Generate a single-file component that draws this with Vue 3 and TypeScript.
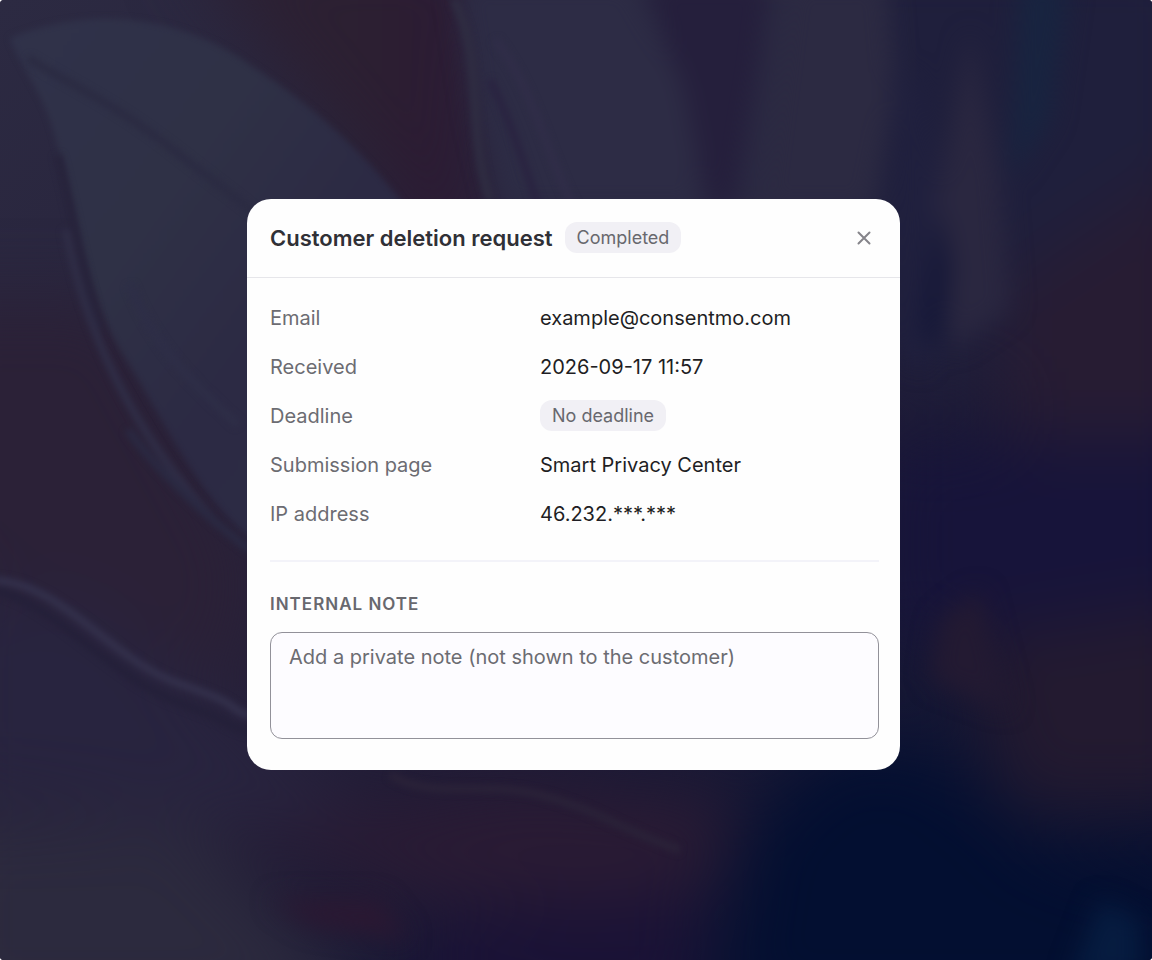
<script setup lang="ts">
import { ref } from 'vue'

interface Detail {
  label: string
  value: string
  badge?: boolean
}

const details: Detail[] = [
  { label: 'Email', value: 'example@consentmo.com' },
  { label: 'Received', value: '2026-09-17 11:57' },
  { label: 'Deadline', value: 'No deadline', badge: true },
  { label: 'Submission page', value: 'Smart Privacy Center' },
  { label: 'IP address', value: '46.232.***.***' },
]

const note = ref('')
</script>

<template>
  <div class="screen">
    <svg
      class="backdrop"
      viewBox="0 0 1152 960"
      preserveAspectRatio="xMidYMid slice"
      color-interpolation-filters="sRGB"
      aria-hidden="true"
    >
      <defs>
        <linearGradient id="base" x1="0" y1="0" x2="1" y2="1">
          <stop offset="0" stop-color="#2c2a42" />
          <stop offset="0.5" stop-color="#251f38" />
          <stop offset="1" stop-color="#060f30" />
        </linearGradient>
        <linearGradient id="petal" x1="0" y1="0" x2="1" y2="1">
          <stop offset="0" stop-color="#30324a" />
          <stop offset="0.35" stop-color="#2f3146" />
          <stop offset="0.6" stop-color="#2c2a44" />
          <stop offset="1" stop-color="#2c2d45" />
        </linearGradient>
        <filter id="soft" x="-50%" y="-50%" width="200%" height="200%"><feGaussianBlur stdDeviation="3" /></filter>
        <filter id="mid" x="-50%" y="-50%" width="200%" height="200%"><feGaussianBlur stdDeviation="12" /></filter>
        <filter id="wide" x="-50%" y="-50%" width="200%" height="200%"><feGaussianBlur stdDeviation="34" /></filter>
      </defs>
      <rect width="1152" height="960" fill="url(#base)" />
      <g filter="url(#wide)">
        <path d="M-80 300H120L260 560L240 690L-80 560Z" fill="#2b2137" />
        <path d="M180 -60H480V240H420L300 90Z" fill="#2c2032" />
        <path d="M400 -60H480V260H400Z" fill="#2c1b33" />
        <path d="M480 -60H900V260H520Z" fill="#2b2a43" />
        <path d="M860 -60H1210V380H860Z" fill="#1f1f3c" />
        <path d="M1000 290L1210 150V460H1000Z" fill="#271c33" />
        <path d="M880 440H1210V640H880Z" fill="#17143a" />
        <path d="M960 640L1210 600V810H1010Z" fill="#231a30" />
        <path d="M-60 590L80 600L260 730L390 830L-60 800Z" fill="#28243f" />
        <path d="M-60 820H190L380 1020H-60Z" fill="#2c2a3e" />
        <path d="M240 830L520 780L740 800L700 910L420 900Z" fill="#2a1b34" />
        <path d="M420 920L700 890V1020H420Z" fill="#1a1236" />
        <path d="M750 830L830 750H930L1040 850L1200 900V1020H720Z" fill="#030f31" />
      </g>
      <path d="M10 38C90 5 180 15 250 65C320 110 370 160 404 205L410 570L258 545C200 500 170 430 120 350C80 280 70 180 50 120C40 90 20 65 10 38Z" fill="url(#petal)" filter="url(#soft)" />
      <g filter="url(#mid)">
        <path d="M456 -20H630L665 45L700 115V210H500L478 120Z" fill="#2d2c45" />
        <path d="M642 -20H770L760 60L735 210H708L684 90Z" fill="#251f3c" />
        <path d="M790 -20H885L895 90L870 210H760Z" fill="#2c2a42" />
        <path d="M890 70L920 80L950 220L922 370L903 350Z" fill="#20203e" />
        <path d="M970 30L1000 180L1010 310L950 350L935 210Z" fill="#2a2740" />
        <path d="M1020 -20H1070L1050 120L1010 180Z" fill="#182440" />
        <path d="M940 210L950 270L938 350L922 330Z" fill="#121536" />
        <path d="M270 900L380 900L410 940L310 925Z" fill="#2b1832" />
        <path d="M1100 900L1140 920V980H1070Z" fill="#061c40" />
        <path d="M940 620L980 590L1010 710L930 680Z" fill="#231a32" />
      </g>
      <g class="veins" filter="url(#soft)">
        <path d="M28 58C70 85 110 100 180 155S270 220 300 260" stroke="#2b2b42" />
        <path d="M58 155C75 220 82 275 100 330" stroke="#27233b" />
        <path d="M66 230C85 330 130 430 218 525" stroke="#2f2d46" />
        <path d="M130 285C155 350 195 385 238 425" stroke="#2e2e47" />
        <path d="M128 430C150 460 185 500 250 550" stroke="#2a2942" />
        <path d="M-5 580C65 585 110 660 180 684S220 705 250 716" stroke="#33304b" />
        <path d="M-5 590C60 607 110 677 180 703S215 722 250 732" stroke="#242039" />
        <path d="M454 0C485 60 466 130 490 200" stroke="#2f2d42" />
        <path d="M495 40C535 90 548 160 575 210" stroke="#302d48" />
        <path d="M490 80C515 130 525 170 540 210" stroke="#2a2441" />
        <path d="M390 775C430 800 480 780 540 795S620 830 680 850" stroke="#2a2238" />
      </g>
    </svg>

    <section class="dialog" role="dialog" aria-labelledby="dialog-title">
      <header class="dialog-header">
        <h1 id="dialog-title" class="title">Customer deletion request</h1>
        <span class="badge">Completed</span>
        <button class="close" type="button" aria-label="Close">
          <svg width="16" height="16" viewBox="0 0 16 16" aria-hidden="true">
            <path d="M2.500 2.500L13.500 13.500M13.500 2.500L2.500 13.500" />
          </svg>
        </button>
      </header>

      <div class="dialog-body">
        <dl class="details">
          <div v-for="item in details" :key="item.label" class="detail">
            <dt>{{ item.label }}</dt>
            <dd><span :class="{ badge: item.badge }">{{ item.value }}</span></dd>
          </div>
        </dl>
        <div class="note">
          <label class="note-label" for="internal-note">INTERNAL NOTE</label>
          <textarea
            id="internal-note"
            v-model="note"
            class="note-input"
            placeholder="Add a private note (not shown to the customer)"
          ></textarea>
        </div>
      </div>
    </section>
  </div>
</template>

<style>
body {
  margin: 0;
  background: #ffffff;
}
</style>

<style scoped>
.screen {
  position: relative;
  box-sizing: border-box;
  min-height: 100vh;
  padding: 9px 5px 0 0;
  display: flex;
  align-items: center;
  justify-content: center;
  overflow: hidden;
  border-radius: 4px;
  background: #28213a;
  font-family: Inter, "Liberation Sans", sans-serif;
  font-size: 20px;
  line-height: 28px;
}

.backdrop {
  position: absolute;
  inset: 0;
  width: 100%;
  height: 100%;
}

.veins path {
  fill: none;
  stroke-width: 8;
}

.dialog {
  position: relative;
  box-sizing: border-box;
  width: 100%;
  max-width: 653px;
  border-radius: 24px;
  background: #fefefe;
  color: #1f1e24;
}

.dialog-header {
  display: flex;
  align-items: center;
  gap: 12px;
  padding: 23px 23px 24px;
  border-bottom: 1px solid #e6e6ea;
}

.title {
  margin: 0;
  font-size: 22px;
  line-height: 28px;
  font-weight: 600;
  color: #303036;
}

.badge {
  padding: 2px 12px;
  border-radius: 12px;
  background: #f1f0f5;
  color: #68686e;
  font-size: 18px;
  line-height: 27px;
}

.close {
  display: flex;
  margin: 0 5px 0 auto;
  padding: 0;
  border: 0;
  background: none;
  cursor: pointer;
}

.close path {
  fill: none;
  stroke: #85848a;
  stroke-width: 2;
  stroke-linecap: round;
}

.dialog-body {
  padding: 15px 21px 31px 23px;
}

.details {
  margin: 0;
  padding-bottom: 22px;
  border-bottom: 2px solid #f3f3f9;
}

.detail {
  display: grid;
  grid-template-columns: 270px 1fr;
  align-items: center;
  height: 49px;
}

dt {
  color: #6c6c72;
}

dd {
  display: flex;
  margin: 0;
}

.note {
  display: flex;
  flex-direction: column;
  gap: 16px;
  padding-top: 30px;
}

.note-label {
  font-size: 17px;
  line-height: 24px;
  font-weight: 600;
  letter-spacing: 1px;
  color: #68686e;
}

.note-input {
  box-sizing: border-box;
  width: 100%;
  height: 107px;
  padding: 10px 18px;
  border: 1px solid #929199;
  border-radius: 12px;
  background: #fdfcff;
  color: #1f1e24;
  font: inherit;
  resize: none;
}

.note-input::placeholder {
  color: #6c6c72;
  opacity: 1;
}
</style>
